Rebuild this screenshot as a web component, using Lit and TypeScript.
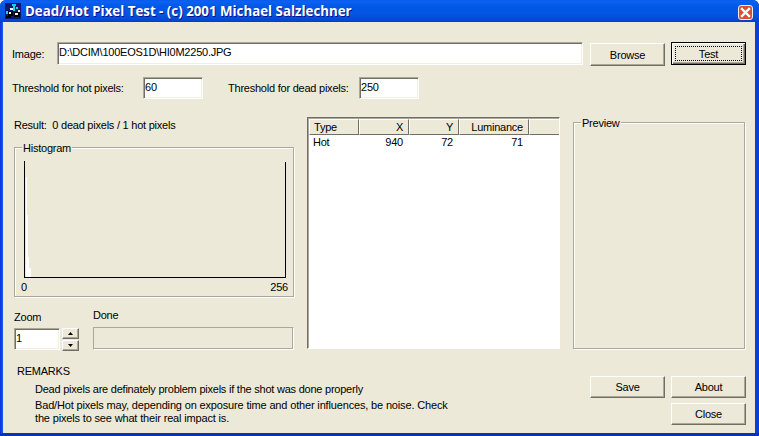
import { LitElement, html, css, svg } from "lit";
import { customElement } from "lit/decorators.js";

const iconCells: [number, number, number, number, string][] = [
  [0, 0, 16, 16, "#0a1a6e"],
  [7, 1, 4, 2, "#19d4e0"],
  [8, 3, 2, 5, "#19d4e0"],
  [11, 4, 2, 2, "#19d4e0"],
  [5, 5, 3, 2, "#e8f4ff"],
  [1, 8, 2, 3, "#19d4e0"],
  [3, 8, 5, 5, "#000000"],
  [4, 9, 2, 2, "#e8f4ff"],
  [9, 9, 6, 5, "#000000"],
  [10, 10, 3, 2, "#e8f4ff"],
  [1, 13, 5, 2, "#000000"],
  [13, 7, 2, 2, "#e8f4ff"],
];

@customElement("app-root")
export class AppRoot extends LitElement {
  static styles = css`
    :host {
      display: block;
      width: 759px;
      height: 436px;
      overflow: hidden;
      background: #fff;
      font-family: "Liberation Sans", Arial, sans-serif;
      font-size: 11px;
      letter-spacing: -0.23px;
      color: #000;
    }
    .window {
      width: 759px;
      height: 436px;
      box-sizing: border-box;
      display: flex;
      flex-direction: column;
      border-radius: 6px 6px 0 0;
      padding: 0 4px 3px 3px;
      background: linear-gradient(90deg, #0831d9 0, #1a5cf0 3px, #0a3fd8 100%);
      box-shadow: inset 0 -3px 0 #0832b8;
    }
    .title {
      flex: none;
      height: 22px;
      margin: 0 -4px 0 -3px;
      padding: 0 6px 0 5px;
      display: flex;
      align-items: center;
      border-radius: 6px 6px 0 0;
      background: linear-gradient(180deg, #0a5bea 0, #0a62f2 2px, #0058e6 6px, #0455e2 14px, #0249d6 20px, #0140c0 22px);
    }
    .app-icon { flex: none; display: block; }
    .title-text {
      margin-left: 4px;
      flex: 1;
      font-family: "Open Sans", sans-serif;
      font-weight: 700;
      font-size: 13.3px;
      letter-spacing: 0;
      color: #fff;
      white-space: nowrap;
      text-shadow: 1px 1px 0 #0f1089;
    }
    .close-x { flex: none; display: block; margin-top: 2px; }

    .client {
      flex: 1;
      min-height: 0;
      background: #ece9d8;
      display: flex;
      flex-direction: column;
      padding: 20px 0 0 0;
    }
    .row-image {
      display: flex;
      align-items: flex-start;
      padding-left: 9px;
      height: 24px;
    }
    .row-image .lbl { width: 45px; line-height: 23px; margin-top: 1px; }
    .row-image .path { width: 526px; height: 23px; }
    .browse { margin-left: 7px; margin-top: 1px; }
    .test { margin-left: 6px; }

    .field {
      box-sizing: border-box;
      background: #fff;
      border: 1px solid;
      border-color: #aca899 #fff #fff #aca899;
      box-shadow: inset 1px 1px 0 #716f64, inset -1px -1px 0 #f1efe2;
      padding: 2px 0 0 1px;
      line-height: 15px;
      white-space: nowrap;
      overflow: hidden;
    }
    .btn {
      box-sizing: border-box;
      width: 75px;
      height: 23px;
      flex: none;
      display: flex;
      align-items: center;
      justify-content: center;
      background: #ece9d8;
      border: 1px solid;
      border-color: #fff #716f64 #716f64 #fff;
      box-shadow: inset -1px -1px 0 #aca899;
      line-height: 14px;
    }
    .btn.default {
      border: 1px solid #000;
      box-shadow: inset 1px 1px 0 #fff, inset -1px -1px 0 #716f64, inset -2px -2px 0 #aca899;
      padding: 3px;
    }
    .focus {
      flex: 1;
      align-self: stretch;
      border: 1px dotted #000;
      display: flex;
      align-items: center;
      justify-content: center;
    }

    .row-thresh {
      display: flex;
      align-items: center;
      margin-top: 11px;
      padding-left: 9px;
      height: 22px;
    }
    .row-thresh .l1 { width: 131px; white-space: nowrap; }
    .row-thresh .l2 { width: 131px; margin-left: 25px; white-space: nowrap; }
    .row-thresh .field { width: 60px; height: 22px; }

    .main {
      display: flex;
      align-items: flex-start;
      margin-top: 18px;
      padding-left: 11px;
      gap: 13px;
    }
    .left { width: 280px; flex: none; display: flex; flex-direction: column; }
    .result { line-height: 15px; height: 15px; margin-top: 1px; }
    .group {
      position: relative;
      box-sizing: border-box;
      border: 1px solid #aca899;
      box-shadow: inset 1px 1px 0 #fff, 1px 1px 0 #fff;
    }
    .legend {
      position: absolute;
      top: -7px;
      left: 7px;
      padding: 0 1px;
      background: #ece9d8;
      line-height: 14px;
    }
    .hist {
      margin-top: 14px;
      width: 280px;
      height: 150px;
      padding: 13px 0 0 9px;
    }
    .hist svg { display: block; }
    .axis {
      display: flex;
      justify-content: space-between;
      width: 267px;
      margin-left: -3px;
      line-height: 14px;
      margin-top: 1px;
    }
    .controls {
      display: flex;
      margin-top: 6px;
      height: 49px;
    }
    .zoom-col { width: 79px; flex: none; padding-top: 7px; box-sizing: border-box; }
    .zoom-col .cap { line-height: 14px; height: 16px; }
    .zoom-field { display: flex; gap: 2px; margin-top: 2px; }
    .zoom-field .field { width: 46px; height: 22px; }
    .spin { display: flex; flex-direction: column; gap: 1px; }
    .spin-btn {
      box-sizing: border-box;
      width: 17px;
      height: 11px;
      display: flex;
      align-items: center;
      justify-content: center;
      background: #ece9d8;
      border: 1px solid;
      border-color: #fff #716f64 #716f64 #fff;
      box-shadow: inset -1px -1px 0 #aca899;
    }
    .done-col { flex: 1; }
    .done-col .cap { line-height: 14px; height: 14px; margin-top: 5px; }
    .progress {
      box-sizing: border-box;
      height: 23px;
      margin-top: 5px;
      border: 1px solid;
      border-color: #aca899 #fff #fff #aca899;
      box-shadow: inset -1px -1px 0 #aca899;
    }

    .list {
      box-sizing: border-box;
      flex: none;
      width: 253px;
      height: 232px;
      background: #fff;
      border: 1px solid;
      border-color: #716f64 #fff #fff #716f64;
      box-shadow: inset 1px 1px 0 #aca899;
      padding: 1px 0 0 1px;
    }
    .list-row {
      display: grid;
      grid-template-columns: 50px 50px 50px 70px 1fr;
    }
    .list-head .cell {
      box-sizing: border-box;
      height: 16px;
      line-height: 15px;
      background: #ece9d8;
      border-top: 1px solid #fff;
      border-left: 1px solid #fff;
      border-right: 1px solid #716f64;
      border-bottom: 1px solid #716f64;
      padding: 0 5px 0 4px;
    }
    .list-head .cell:last-child { border-right: none; }
    .list-body .cell { line-height: 15px; padding: 0 6px 0 4px; }
    .r { text-align: right; }

    .preview {
      flex: none;
      width: 172px;
      height: 227px;
      margin-top: 5px;
    }

    .bottom {
      display: flex;
      justify-content: space-between;
      padding: 0 9px 0 14px;
    }
    .remarks { margin-top: 12px; width: 440px; }
    .remarks .head { line-height: 14px; height: 18px; }
    .remarks p { margin: 0 0 0 18px; line-height: 13px; letter-spacing: -0.16px; }
    .remarks p.first { height: 17px; line-height: 15px; letter-spacing: -0.23px; }
    .actions {
      margin-top: 24px;
      display: grid;
      grid-template-columns: 75px 75px;
      column-gap: 6px;
      row-gap: 5px;
    }
    .actions .btn { height: 22px; }
    .actions .close { grid-column: 2; }
  `;

  render() {
    return html`
      <div class="window">
        <div class="title">
          <svg class="app-icon" width="16" height="16" viewBox="0 0 16 16" shape-rendering="crispEdges">
            ${iconCells.map(
              ([x, y, w, h, c]) => svg`<rect x=${x} y=${y} width=${w} height=${h} fill=${c}></rect>`
            )}
          </svg>
          <div class="title-text">Dead/Hot Pixel Test - (c) 2001 Michael Salzlechner</div>
          <svg class="close-x" width="15" height="15" viewBox="0 0 15 15">
            <rect x="0.5" y="0.5" width="14" height="14" rx="2.5" fill="#d8502e" stroke="#f4ede8"></rect>
            <path d="M4 4 L11 11 M11 4 L4 11" stroke="#fff" stroke-width="2.4" stroke-linecap="square"></path>
          </svg>
        </div>
        <div class="client">
          <div class="row-image">
            <div class="lbl">Image:</div>
            <div class="field path">D:\\DCIM\\100EOS1D\\HI0M2250.JPG</div>
            <div class="btn browse">Browse</div>
            <div class="btn default test"><div class="focus">Test</div></div>
          </div>
          <div class="row-thresh">
            <div class="l1">Threshold for hot pixels:</div>
            <div class="field">60</div>
            <div class="l2">Threshold for dead pixels:</div>
            <div class="field">250</div>
          </div>
          <div class="main">
            <div class="left">
              <div class="result">Result:&nbsp; 0 dead pixels / 1 hot pixels</div>
              <div class="group hist">
                <div class="legend">Histogram</div>
                <svg width="262" height="118" viewBox="0 0 262 118" shape-rendering="crispEdges">
                  <rect x="2" y="16" width="1" height="100" fill="#fff"></rect>
                  <rect x="3" y="54" width="1" height="62" fill="#fff"></rect>
                  <rect x="4" y="96" width="1" height="20" fill="#fff"></rect>
                  <rect x="5" y="107" width="2" height="9" fill="#fff"></rect>
                  <rect x="0" y="0" width="1" height="117" fill="#000"></rect>
                  <rect x="261" y="1" width="1" height="116" fill="#000"></rect>
                  <rect x="0" y="116" width="262" height="1" fill="#000"></rect>
                </svg>
                <div class="axis"><span>0</span><span>256</span></div>
              </div>
              <div class="controls">
                <div class="zoom-col">
                  <div class="cap">Zoom</div>
                  <div class="zoom-field">
                    <div class="field">1</div>
                    <div class="spin">
                      <div class="spin-btn">
                        <svg width="5" height="3" viewBox="0 0 5 3"><path d="M2.5 0 L5 3 L0 3 Z" fill="#000"></path></svg>
                      </div>
                      <div class="spin-btn">
                        <svg width="5" height="3" viewBox="0 0 5 3"><path d="M0 0 L5 0 L2.5 3 Z" fill="#000"></path></svg>
                      </div>
                    </div>
                  </div>
                </div>
                <div class="done-col">
                  <div class="cap">Done</div>
                  <div class="progress"></div>
                </div>
              </div>
            </div>
            <div class="list">
              <div class="list-row list-head">
                <div class="cell">Type</div>
                <div class="cell r">X</div>
                <div class="cell r">Y</div>
                <div class="cell r">Luminance</div>
                <div class="cell"></div>
              </div>
              <div class="list-row list-body">
                <div class="cell">Hot</div>
                <div class="cell r">940</div>
                <div class="cell r">72</div>
                <div class="cell r">71</div>
                <div class="cell"></div>
              </div>
            </div>
            <div class="group preview"><div class="legend">Preview</div></div>
          </div>
          <div class="bottom">
            <div class="remarks">
              <div class="head">REMARKS</div>
              <p class="first">Dead pixels are definately problem pixels if the shot was done properly</p>
              <p>Bad/Hot pixels may, depending on exposure time and other influences, be noise. Check the pixels to see what their real impact is.</p>
            </div>
            <div class="actions">
              <div class="btn">Save</div>
              <div class="btn">About</div>
              <div class="btn close">Close</div>
            </div>
          </div>
        </div>
      </div>
    `;
  }
}
